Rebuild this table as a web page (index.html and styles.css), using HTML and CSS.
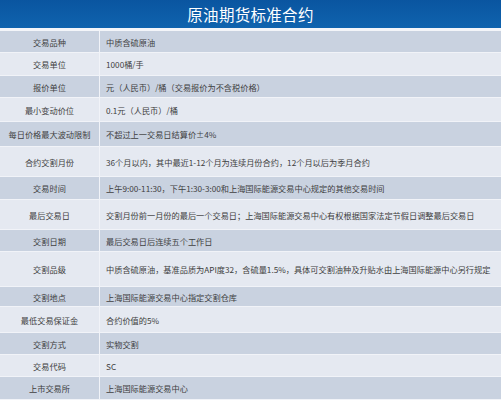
FILE: index.html
```html
<!DOCTYPE html>
<html lang="zh">
<head>
<meta charset="utf-8">
<link rel="stylesheet" href="styles.css">
</head>
<body>
<div class="page">
  <div class="title">原油期货标准合约</div>
  <div class="table">
    <div class="row dark h22"><div class="k">交易品种</div><div class="v">中质含硫原油</div></div>
    <div class="row light h23"><div class="k">交易单位</div><div class="v">1000桶/手</div></div>
    <div class="row dark h22"><div class="k">报价单位</div><div class="v">元（人民币）/桶（交易报价为不含税价格）</div></div>
    <div class="row light h24"><div class="k">最小变动价位</div><div class="v">0.1元（人民币）/桶</div></div>
    <div class="row dark h25"><div class="k">每日价格最大波动限制</div><div class="v">不超过上一交易日结算价±4%</div></div>
    <div class="row light h30"><div class="k">合约交割月份</div><div class="v">36个月以内，其中最近1-12个月为连续月份合约，12个月以后为季月合约</div></div>
    <div class="row dark h23"><div class="k">交易时间</div><div class="v">上午9:00-11:30，下午1:30-3:00和上海国际能源交易中心规定的其他交易时间</div></div>
    <div class="row light h30"><div class="k">最后交易日</div><div class="v">交割月份前一月份的最后一个交易日；上海国际能源交易中心有权根据国家法定节假日调整最后交易日</div></div>
    <div class="row dark h22"><div class="k">交割日期</div><div class="v">最后交易日后连续五个工作日</div></div>
    <div class="row light h35"><div class="k">交割品级</div><div class="v">中质含硫原油，基准品质为API度32，含硫量1.5%，具体可交割油种及升贴水由上海国际能源中心另行规定</div></div>
    <div class="row dark h20"><div class="k">交割地点</div><div class="v">上海国际能源交易中心指定交割仓库</div></div>
    <div class="row light h26"><div class="k">最低交易保证金</div><div class="v">合约价值的5%</div></div>
    <div class="row dark h22"><div class="k">交割方式</div><div class="v">实物交割</div></div>
    <div class="row light h22"><div class="k">交易代码</div><div class="v">SC</div></div>
    <div class="row dark h23"><div class="k">上市交易所</div><div class="v">上海国际能源交易中心</div></div>
  </div>
</div>
</body>
</html>
```
FILE: styles.css
```css
html, body {
  margin: 0;
  padding: 0;
  background: #eef1f6;
}
.page {
  width: 501px;
  height: 400px;
  overflow: hidden;
  font-family: "Noto Sans CJK SC", "Noto Sans", sans-serif;
  color: #404040;
}
.title {
  height: 28px;
  background: linear-gradient(#0a55a0, #0f63ae);
  color: #ffffff;
  font-size: 15.5px;
  line-height: 28px;
  text-align: center;
  letter-spacing: 0.3px;
  border-bottom: 3px solid #f3f5f9;
  box-sizing: content-box;
}
.table {
  display: flex;
  flex-direction: column;
}
.row {
  display: grid;
  grid-template-columns: 100px 1fr;
  font-size: 8.2px;
  box-sizing: border-box;
  border-bottom: 1px solid #f1f3f8;
}
.row.dark { background: #c9d2e0; }
.row.light { background: #e5e9f1; }
.k {
  display: flex;
  align-items: center;
  justify-content: center;
  border-right: 1px solid #f1f3f8;
  white-space: nowrap;
}
.v {
  display: flex;
  align-items: center;
  padding-left: 6px;
  white-space: nowrap;
}
.h20 { height: 20px; }
.h22 { height: 22px; }
.h23 { height: 23px; }
.h24 { height: 24px; }
.h25 { height: 25px; }
.h26 { height: 26px; }
.h30 { height: 30px; }
.h35 { height: 35px; }
```
